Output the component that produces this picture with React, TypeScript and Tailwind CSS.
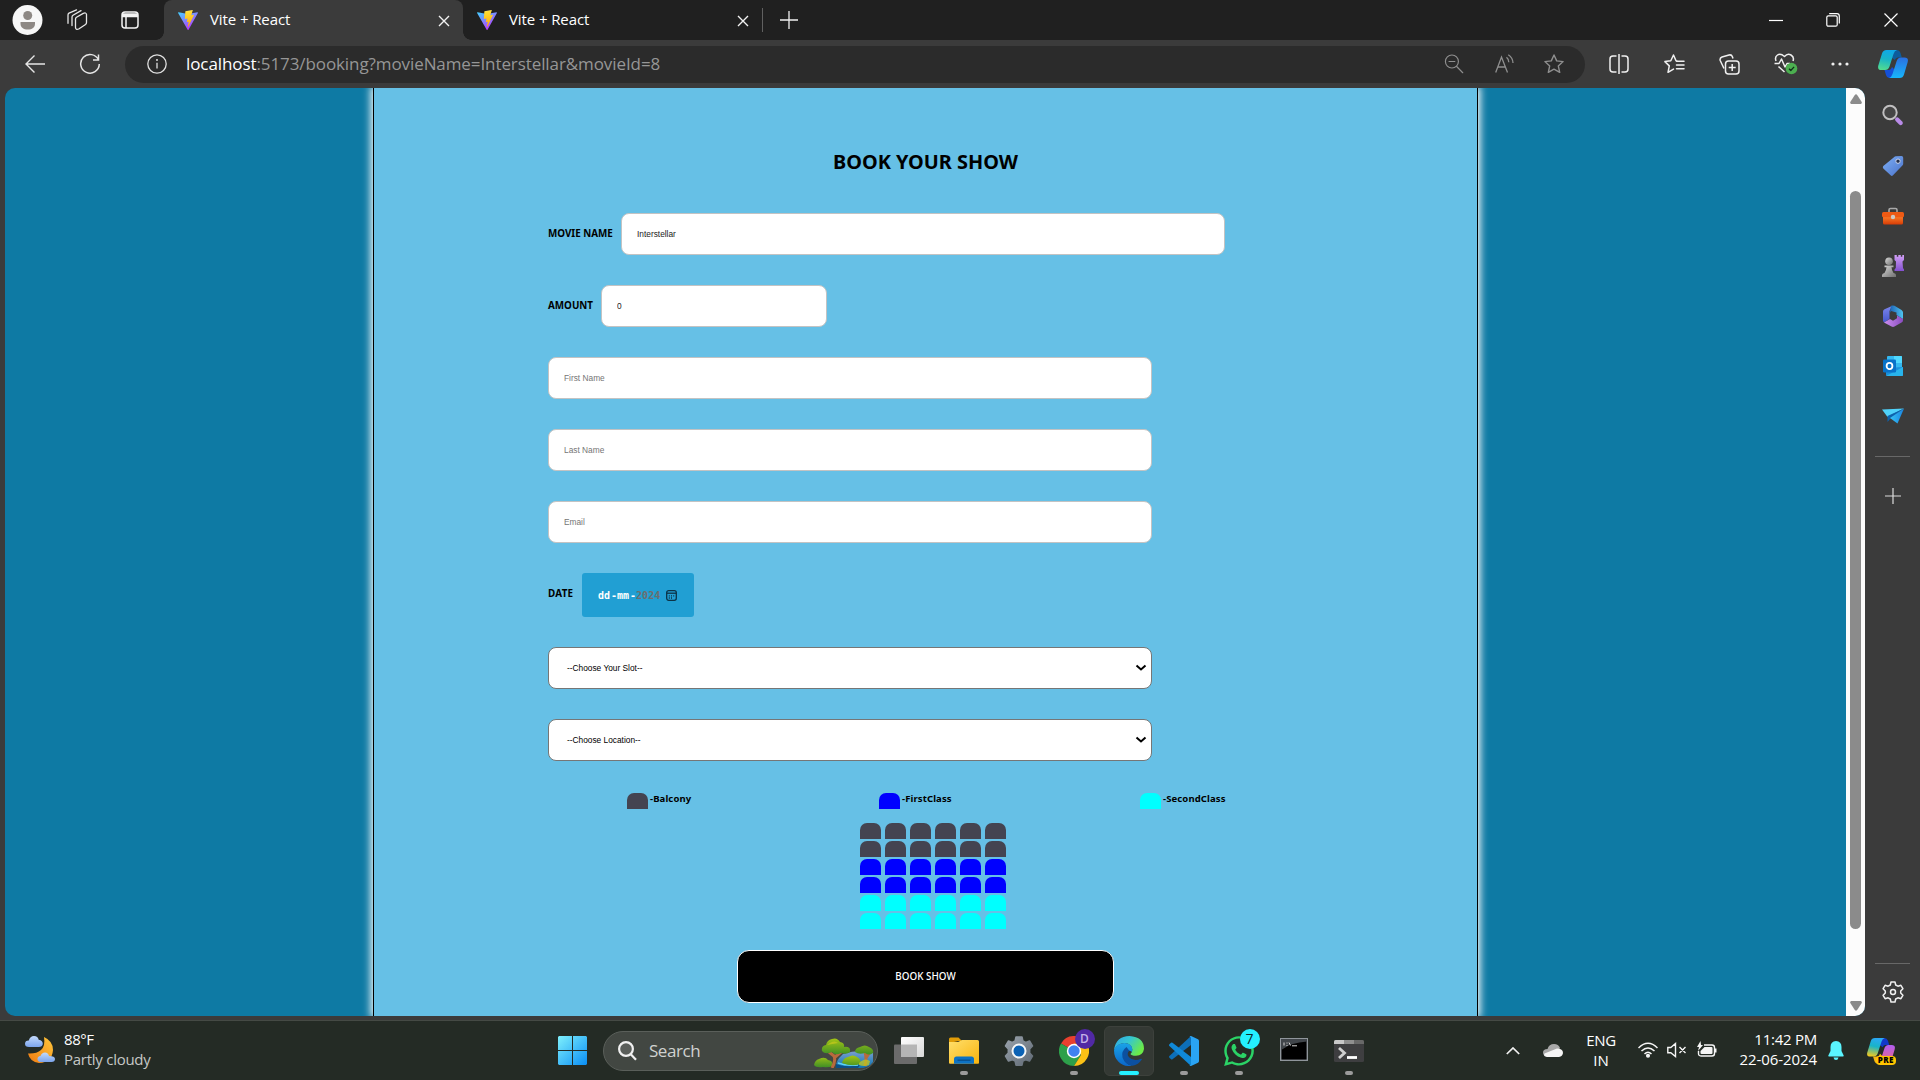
import type { ReactNode } from "react";
import { FaWhatsapp } from "react-icons/fa";

const ui = "font-['Open_Sans','Noto_Sans',sans-serif]";

function ViteLogo() {
  return (
    <svg viewBox="0 0 256 257" className="h-5 w-5 shrink-0">
      <defs>
        <linearGradient id="va" x1="0" x2="0.6" y1="0" y2="1"><stop stopColor="#41D1FF" /><stop offset="1" stopColor="#BD34FE" /></linearGradient>
        <linearGradient id="vb" x1="0.4" x2="0.5" y1="0" y2="1"><stop stopColor="#FFEA83" /><stop offset="0.1" stopColor="#FFDD35" /><stop offset="1" stopColor="#FFA800" /></linearGradient>
      </defs>
      <path fill="url(#va)" d="M255.153 37.938L134.897 252.976c-2.483 4.44-8.862 4.466-11.382.048L.875 37.958c-2.746-4.814 1.371-10.646 6.827-9.67l120.385 21.517a6.537 6.537 0 0 0 2.322-.004l117.867-21.483c5.438-.991 9.574 4.796 6.877 9.62Z" />
      <path fill="url(#vb)" d="M185.432.063L96.44 17.501a3.268 3.268 0 0 0-2.634 3.014l-5.474 92.456a3.268 3.268 0 0 0 3.997 3.378l24.777-5.718c2.318-.535 4.413 1.507 3.936 3.838l-7.361 36.047c-.495 2.426 1.782 4.5 4.151 3.78l15.304-4.649c2.372-.72 4.652 1.36 4.15 3.788l-11.698 56.621c-.732 3.542 3.979 5.473 5.943 2.437l1.313-2.028l72.516-144.72c1.215-2.423-.88-5.186-3.54-4.672l-25.505 4.922c-2.396.462-4.435-1.77-3.759-4.114l16.646-57.705c.677-2.35-1.37-4.583-3.769-4.113Z" />
    </svg>
  );
}

function CloseX() {
  return (
    <svg viewBox="0 0 12 12" className="mt-px h-3 w-3 shrink-0" stroke="#f2f2f2" strokeWidth="1.4" fill="none"><path d="M1 1l10 10M11 1L1 11" /></svg>
  );
}

function Line({ children, className }: { children: ReactNode; className: string }) {
  return (
    <svg viewBox="0 0 24 24" fill="none" stroke="currentColor" strokeWidth="1.4" strokeLinecap="round" strokeLinejoin="round" className={className}>{children}</svg>
  );
}

function TabStrip() {
  return (
    <div className="flex h-10 w-full items-stretch bg-[#202020] text-white">
      <div className="flex w-[164px] items-center pl-3">
        <svg viewBox="0 0 30 30" className="h-[30px] w-[31px]"><circle cx="15" cy="15" r="15" fill="#f7f7f7" /><circle cx="15.200" cy="10.500" r="4.500" fill="#8d8884" /><path d="M8 17h14.500v1.500c0 4-3 6-7.200 6S8 22.500 8 18.500z" fill="#8d8884" /></svg>
        <svg viewBox="0 0 22 22" className="ml-[23px] h-[22px] w-[22px]" fill="none" stroke="#e6e6e6" strokeWidth="1.300" strokeLinecap="round" strokeLinejoin="round"><path d="M9.500 10.200q0-1.200 1-1.900l6.800-3.900q2.700-1.300 3.200 1v8.200q0 1.200-1 1.900L12.700 20q-2.900 1.300-3.200-1.500zM6 16.500V8.200q0-1.200 1-1.900l8-4.700M2 14.300V6q0-1.200 1-1.900L10.500.8" /></svg>
        <svg viewBox="0 0 18 18" className="ml-[33px] h-[18px] w-[18px]" fill="none" stroke="#f2f2f2" strokeWidth="1.500"><rect x="1" y="1" width="16" height="16" rx="3" /><path d="M1 3.500h16M1 5h16" strokeWidth="2.500" /><path d="M5 5v12" /></svg>
      </div>
      <div className="relative flex w-[299px] items-center rounded-t-lg bg-[#3b3b3b] pl-3.5 pr-[13px]">
        <ViteLogo />
        <span className="-mt-0.5 ml-3 flex-1 text-[15px] tracking-[-0.1px]">Vite + React</span>
        <CloseX />
        <div className="absolute bottom-0 -left-2 h-2 w-2 bg-[radial-gradient(circle_at_0_0,#202020_7.5px,#3b3b3b_8px)]" />
        <div className="absolute bottom-0 -right-2 h-2 w-2 bg-[radial-gradient(circle_at_100%_0,#202020_7.5px,#3b3b3b_8px)]" />
      </div>
      <div className="flex w-[299px] items-center pl-3.5 pr-[13px]">
        <ViteLogo />
        <span className="-mt-0.5 ml-3 flex-1 text-[15px] tracking-[-0.1px]">Vite + React</span>
        <CloseX />
      </div>
      <div className="my-2 w-px bg-[#606060]" />
      <div className="flex flex-1 items-center pl-[17px]">
        <svg viewBox="0 0 18 18" className="h-[18px] w-[18px]" stroke="#f0f0f0" strokeWidth="1.300"><path d="M9 0v18M0 9h18" /></svg>
      </div>
      <div className="flex items-center">
        <svg viewBox="0 0 14 14" className="mr-[43px] h-[14px] w-[14px]" stroke="#fff" strokeWidth="1.200"><path d="M0 7.500h14" /></svg>
        <svg viewBox="0 0 14 14" className="mr-[44px] h-[14px] w-[14px]" stroke="#fff" strokeWidth="1.200" fill="none"><rect x=".8" y="2.800" width="10.400" height="10.400" rx="1.500" /><path d="M3.200.7h7.800q2.300 0 2.300 2.300v7.500" /></svg>
        <svg viewBox="0 0 14 14" className="mr-[22px] h-[14px] w-[14px]" stroke="#fff" strokeWidth="1.200"><path d="M.5.5l13 13M13.500.5l-13 13" /></svg>
      </div>
    </div>
  );
}

function CopilotLogo({ id, warm }: { id: string; warm?: boolean }) {
  return (
    <svg viewBox="0 0 30 28" className="h-[28px] w-[30px]">
      <defs>
        <linearGradient id={id + "a"} x1=".5" x2=".3" y1="0" y2="1"><stop stopColor={warm ? "#2ba8f5" : "#10a8e8"} /><stop offset=".45" stopColor="#18b4c8" /><stop offset="1" stopColor={warm ? "#f5c91c" : "#52dc8f"} /></linearGradient>
        <linearGradient id={id + "b"} x1=".5" x2=".5" y1="0" y2="1"><stop stopColor={warm ? "#b05cf2" : "#2b6fe0"} /><stop offset="1" stopColor={warm ? "#f26a78" : "#17b6fb"} /></linearGradient>
      </defs>
      <path d="M14 0h4.500q3 0 4 3l1.300 4.500h-4q-2 0-3 2.500l-4-3z" fill={warm ? "#1238c8" : "#0d5c9c"} />
      <path d="M16 28h-4q-3 0-4-3l-1.500-5h4q2.500 0 3.500-3l4 4z" fill={warm ? "#f7b514" : "#1550d8"} />
      <path d="M8.500 0H19q-2.500.6-3.500 4l-4 12.500Q10.300 20 7 20H3.500Q-.8 20 .3 15.500L4 3.500Q5 0 8.500 0z" fill={`url(#${id}a)`} />
      <path d="M21.500 28H11q2.500-.6 3.500-4l4-12.500Q19.700 7.500 23 7.500h3.500q4.300 0 3.200 4.500L26 24.500Q25 28 21.500 28z" fill={`url(#${id}b)`} />
    </svg>
  );
}

function Toolbar() {
  return (
    <div className="flex h-12 w-full items-center bg-[#3b3b3b] text-[#e9e9e9]">
      <svg viewBox="0 0 20 18" className="ml-[25px] h-[18px] w-5" fill="none" stroke="#e6e6e6" strokeWidth="1.400"><path d="M20 9H1M9.500.5L1 9l8.500 8.500" /></svg>
      <svg viewBox="0 0 22 22" className="ml-[34px] h-[22px] w-[22px]" fill="none" stroke="#e6e6e6" strokeWidth="1.500"><path d="M19.500 7A9.300 9.300 0 1 0 20.300 11M19.500 1.500V7H14" /></svg>
      <div className="ml-[24px] flex h-[37px] w-[1460px] items-center rounded-full bg-[#2b2b2b] pl-[22px]">
        <svg viewBox="0 0 20 20" className="h-5 w-5" fill="none" stroke="#e0e0e0" strokeWidth="1.300"><circle cx="10" cy="10" r="9.200" /><path d="M10 8.800v5.700" /><circle cx="10" cy="6" r=".4" /></svg>
        <span className="-mt-0.5 ml-[19px] flex-1 text-[17px] leading-none tracking-[-0.09px] text-[#969696]"><span className="text-white">localhost</span>:5173/booking?movieName=Interstellar&amp;movieId=8</span>
        <Line className="mr-[31px] h-5 w-5 text-[#8f8f8f]"><circle cx="9.500" cy="9" r="7.800" /><path d="M15.200 15l7.300 7.500M6 9h7" /></Line>
        <svg viewBox="0 0 20 20" className="mr-[29px] h-5 w-5" fill="none" stroke="#8f8f8f" strokeWidth="1.300"><path d="M.7 18.500L6.500 3l6 15.500M3 13h7.500M11.500 3.200q2.300 1.800 2.300 5M13.300.8q4.500 3 4.700 8.200" /></svg>
        <svg viewBox="0 0 20 20" className="mr-[21px] h-5 w-5" fill="none" stroke="#8f8f8f" strokeWidth="1.400" strokeLinejoin="round"><path d="M10 1l2.700 5.900 6.400.7-4.800 4.300 1.400 6.400L10 15.100l-5.700 3.200 1.400-6.400L.9 7.600l6.400-.7z" /></svg>
      </div>
      <svg viewBox="0 0 20 20" className="ml-[24px] h-5 w-5" fill="none" stroke="#f0f0f0" strokeWidth="1.500"><path d="M7.500 2H4Q1 2 1 5v10q0 3 3 3h3.500M12.500 2H16q3 0 3 3v10q0 3-3 3h-3.500M10 0v20" /></svg>
      <svg viewBox="0 0 21 20" className="ml-[35px] h-5 w-[21px]" fill="none" stroke="#f0f0f0" strokeWidth="1.500" strokeLinejoin="round" strokeLinecap="round"><path d="M13 7l-1-.2L9.500 1 6.800 6.800.9 7.600l4.400 4.300L4 18.300l5.500-3.200M12.500 7.300H20M12.500 11H20M12.500 14.700H20" /></svg>
      <svg viewBox="0 0 21 21" className="ml-[34px] h-[21px] w-[21px]" fill="none" stroke="#f0f0f0" strokeWidth="1.500" strokeLinejoin="round"><path d="M5 14.500L1.200 6.500Q.5 4 3 3L10 1q2.500-.6 3.300 1.500l.7 2" /><rect x="6.500" y="7" width="13.500" height="13" rx="3" /><path d="M13.200 10v7M9.700 13.500h7" /></svg>
      <svg viewBox="0 0 24 22" className="ml-[34px] h-[22px] w-6" fill="none" stroke="#f0f0f0" strokeWidth="1.500" strokeLinejoin="round"><path d="M2 8Q.5 4 3.500 2t7 1.500q3-3.500 6.500-1.500t2 6M.5 10.500H5L7.500 6l3.500 8 2-3.500h3M4.500 13.500l6 5.500" /><circle cx="17.500" cy="15.500" r="5.800" fill="#4caf50" stroke="none" /><path d="M15 15.700l1.800 1.800 3.300-3.600" strokeWidth="1.300" stroke="#10301a" /></svg>
      <svg viewBox="0 0 18 4" className="ml-[33px] h-1 w-[18px]" fill="#f0f0f0"><circle cx="2" cy="2" r="1.600" /><circle cx="9" cy="2" r="1.600" /><circle cx="16" cy="2" r="1.600" /></svg>
      <div className="ml-[29px]"><CopilotLogo id="ca" /></div>
    </div>
  );
}

const label = "font-['Noto_Sans',sans-serif] font-bold leading-none text-black";
const inputBase = "h-[42px] rounded-lg border border-[#c3c3c3] bg-white px-[15px] font-['Liberation_Sans',Arial,sans-serif] text-[8.33px] text-[#222] outline-none placeholder:text-[#757575]";

function SelectBox({ text }: { text: string }) {
  return (
    <div className="flex h-[42px] w-[604px] items-center justify-between rounded-lg border border-[#767676] bg-white pl-[18px] pr-[4px] font-['Liberation_Sans',Arial,sans-serif] text-[8.33px] text-black">
      <span>{text}</span>
      <svg viewBox="0 0 12 8" className="h-2 w-3" fill="none" stroke="#000" strokeWidth="2"><path d="M1.500 1.500L6 5.500l4.500-4" /></svg>
    </div>
  );
}

const seatColors = ["bg-[#444451]", "bg-[#444451]", "bg-[#0000ff]", "bg-[#0000ff]", "bg-[#00ffff]", "bg-[#00ffff]"];

function Legend({ color, name, className }: { color: string; name: string; className: string }) {
  return (
    <div className={"flex " + className}>
      <div className={"h-4 w-[21px] rounded-t-[7px] " + color} />
      <span className={label + " ml-[2px] mt-px self-start text-[9.500px] tracking-[0.12px]"}>{name}</span>
    </div>
  );
}

function BookingPage() {
  return (
    <div className="flex h-[928px] w-[1860px] overflow-hidden rounded-[10px] bg-[#0e7aa4]">
      <div className="flex w-[1841px] justify-start overflow-hidden pl-[368px]">
        <div className="flex h-full w-[1105px] flex-col border-x border-black bg-[#66c0e6] pl-[174px] shadow-[0_0_8px_2px_#fff]">
          <h1 className={label + " -ml-[174px] mt-[64px] h-5 text-center text-[19.900px]"}>BOOK YOUR SHOW</h1>
          <div className="mt-[41px] flex items-center">
            <span className={label + " w-[73px] whitespace-nowrap text-[9.850px]"}>MOVIE NAME</span>
            <input readOnly value="Interstellar" className={inputBase + " w-[604px]"} />
          </div>
          <div className="mt-[30px] flex items-center">
            <span className={label + " w-[53px] whitespace-nowrap text-[9.850px]"}>AMOUNT</span>
            <input readOnly value="0" className={inputBase + " w-[226px]"} />
          </div>
          <input readOnly placeholder="First Name" className={inputBase + " mt-[30px] w-[604px]"} />
          <input readOnly placeholder="Last Name" className={inputBase + " mt-[30px] w-[604px]"} />
          <input readOnly placeholder="Email" className={inputBase + " mt-[30px] w-[604px]"} />
          <div className="mt-[30px] flex items-center">
            <span className={label + " -mt-0.5 w-[34px] text-[9.850px] tracking-[0.25px]"}>DATE</span>
            <div className="flex h-11 w-[112px] items-center rounded-[3px] bg-[#219fd3] pl-4 font-['DejaVu_Sans_Mono',monospace] text-[10px] font-bold text-white">
              <span>dd</span><span className="ml-px w-[6px]">-</span><span>mm</span><span className="ml-px w-[6px]">-</span><span className="text-[#6d6d6d]">2024</span>
              <svg viewBox="0 0 11 11" className="ml-[6px] h-[11px] w-[11px]" fill="none" stroke="#0c3346" strokeWidth="1.300"><rect x=".7" y=".7" width="9.600" height="9.600" rx="2" /><path d="M.7 3.200h9.600" /><path d="M2.800 5.800h1M5 5.800h1M7.200 5.800h1M2.800 8h1M5 8h1" /></svg>
            </div>
          </div>
          <div className="mt-[30px] flex flex-col gap-[30px]">
            <SelectBox text="--Choose Your Slot--" />
            <SelectBox text="--Choose Location--" />
          </div>
          <div className="mt-8 flex pl-[79px]">
            <Legend color="bg-[#444451]" name="-Balcony" className="w-[252px]" />
            <Legend color="bg-[#0000ff]" name="-FirstClass" className="w-[261px]" />
            <Legend color="bg-[#00ffff]" name="-SecondClass" className="w-[100px]" />
          </div>
          <div className="ml-[312px] mt-[14px] grid w-[146px] grid-cols-6 gap-x-1 gap-y-0.5">
            {seatColors.map((c, r) => [0, 1, 2, 3, 4, 5].map((n) => <div key={r + "-" + n} className={"h-4 w-[21px] rounded-t-[7px] " + c} />))}
          </div>
          <button className="ml-[189px] mt-[21px] h-[53px] w-[377px] rounded-xl border border-white bg-black font-['Noto_Sans',sans-serif] text-[9.850px] font-medium text-white">BOOK SHOW</button>
        </div>
      </div>
      <div className="flex w-[19px] flex-col items-center bg-[#fcfcfc]">
        <svg viewBox="0 0 12 10" className="mt-1.5 h-2.5 w-3" fill="#8b8b8b"><path d="M4.800 1Q6 -.5 7.200 1l4.500 7q.6 1.700-1 2H1.300q-1.600-.3-1-2z" /></svg>
        <div className="mt-[87px] h-[738px] w-[11px] rounded-full bg-[#8b8b8b]" />
        <svg viewBox="0 0 12 10" className="mt-[72px] h-2.5 w-3 rotate-180" fill="#8b8b8b"><path d="M4.800 1Q6 -.5 7.200 1l4.500 7q.6 1.700-1 2H1.300q-1.600-.3-1-2z" /></svg>
      </div>
    </div>
  );
}

function Cell({ children }: { children: ReactNode }) {
  return <div className="flex h-[50.2px] items-center justify-center">{children}</div>;
}

function Sidebar() {
  return (
    <div className="flex w-[55px] flex-col items-center pt-[2px]">
      <svg width="0" height="0" className="absolute"><defs>
        <linearGradient id="tag" x1="0" x2="1" y1="0" y2="1"><stop stopColor="#7fb0f7" /><stop offset="1" stopColor="#4a72c9" /></linearGradient>
        <linearGradient id="box" x1="0" x2="0" y1="0" y2="1"><stop stopColor="#f77a28" /><stop offset="1" stopColor="#d83c05" /></linearGradient>
        <linearGradient id="pawn" x1="0" x2="1" y1="0" y2="1"><stop stopColor="#d8d8d8" /><stop offset="1" stopColor="#707070" /></linearGradient>
        <linearGradient id="rook" x1="0" x2="0" y1="0" y2="1"><stop stopColor="#d3a0f7" /><stop offset="1" stopColor="#8350cf" /></linearGradient>
        <linearGradient id="m1" x1="0" x2="0" y1="0" y2="1"><stop stopColor="#7d86ee" /><stop offset="1" stopColor="#4557cc" /></linearGradient>
        <linearGradient id="m2" x1="0" x2="1"><stop stopColor="#1b62b5" /><stop offset="1" stopColor="#4fc4f0" /></linearGradient>
        <linearGradient id="m3" x1="0" x2="1"><stop stopColor="#cc8ff0" /><stop offset="1" stopColor="#8a4cc0" /></linearGradient>
        <linearGradient id="pl" x1="0" x2="1"><stop stopColor="#35c2f5" /><stop offset="1" stopColor="#1b84e0" /></linearGradient>
      </defs></svg>
      <Cell><svg viewBox="0 0 22 22" className="h-[22px] w-[22px]" fill="none"><circle cx="8" cy="8.500" r="6.700" stroke="#c0bfc0" strokeWidth="2" fill="#454545" /><path d="M15.200 15.500l3.500 3.500" stroke="#b98be8" strokeWidth="4.200" strokeLinecap="round" /></svg></Cell>
      <Cell><svg viewBox="0 0 22 22" className="mt-px h-[22px] w-[22px]"><path d="M12 2.200Q12.800 1.300 14 1.300l5.500-.3q1.700 0 1.700 1.700v6q0 1-.8 1.900L11 20.300q-1.200 1.200-2.400 0L1.300 13.500q-1-1.200 0-2.400z" fill="url(#tag)" /><circle cx="16" cy="6.200" r="2.200" fill="#25314d" stroke="#cfd8ef" strokeWidth="1" /></svg></Cell>
      <Cell><svg viewBox="0 0 22 18" className="mt-0.5 h-[18px] w-[22px]"><path d="M7 6V3q0-1.500 1.500-1.500h5Q15 1.500 15 3v3" fill="none" stroke="#a9a9a9" strokeWidth="1.600" /><path d="M1 10h20v6q0 1.500-1.500 1.500h-17Q1 17.500 1 16z" fill="url(#box)" /><path d="M0 6.500Q0 5 1.500 5h19Q22 5 22 6.500v2.200q0 1.500-1.500 1.500h-19Q0 10.200 0 8.700z" fill="#ee5a14" /><circle cx="11" cy="10" r="2.200" fill="#cfcac6" /></svg></Cell>
      <Cell><svg viewBox="0 0 22 22" className="h-[22px] w-[22px]"><path d="M12.500 0h2.300v1.700h1.500V0h2.500v1.700h1.500V0H22v5l-1.500 1.500L21 13l1 1.500V16h-9.500v-1.500l1.300-1.500.2-6.500L12.500 5z" fill="url(#rook)" /><circle cx="7" cy="6.300" r="3.800" fill="url(#pawn)" /><path d="M2.500 10.500h9v1.800H9.500q.3 3.500 2 5.700h-9q1.800-2.500 2-5.700h-2zM2.500 18h9q2.500.3 2.500 2v2H0v-2q.3-1.700 2.500-2z" fill="url(#pawn)" /></svg></Cell>
      <Cell><svg viewBox="0 0 22 22" className="h-[22px] w-[22px]"><path d="M10 1L7.500 6v8L2 17.500 1 16V6.500Q1 5 2.500 4.200z" fill="url(#m1)" /><path d="M9 .8Q11 0 12.500.8L19.500 5Q21 6 21 7.500V14l-6.500-4V7.500L9 6 7.800 8z" fill="url(#m2)" /><path d="M2 17.500L8 14l3 1.800 4-2.600V10.500l6 3.500v1.300q0 1.300-1 2L12.500 21.500q-1.500.8-3 0z" fill="url(#m3)" /></svg></Cell>
      <Cell><svg viewBox="0 0 20 20" className="h-5 w-5"><rect x="4" y="0" width="15" height="13" rx="1" fill="#34b8f0" /><path d="M11 0h7q1 0 1 1v6h-8z" fill="#4fd8ff" /><path d="M3 12l17-1v8q0 1-1 1H4q-1 0-1-1z" fill="#1b90dc" /><path d="M3 20l17-9v8q0 1-1 1z" fill="#28b4ec" /><rect x="0" y="3.500" width="13" height="13" rx="1.200" fill="#0872c9" /><ellipse cx="6.500" cy="10" rx="2.900" ry="3.100" fill="none" stroke="#fff" strokeWidth="1.800" /></svg></Cell>
      <Cell><svg viewBox="0 0 22 16" className="h-4 w-[22px]"><path d="M0 1.500L22 .5 5.500 9z" fill="#4fd2fa" /><path d="M5.500 8L22 .5 8.500 10.500 5.500 14z" fill="#0d62ad" /><path d="M22 .5L15.500 15.500 8 10z" fill="url(#pl)" /></svg></Cell>
      <div className="mt-[15px] h-px w-[35px] bg-[#686868]" />
      <svg viewBox="0 0 16 16" className="mt-[31px] h-4 w-4" stroke="#dcdcdc" strokeWidth="1.200"><path d="M8 0v16M0 8h16" /></svg>
      <div className="mt-auto h-px w-[35px] bg-[#686868]" />
      <svg viewBox="0 0 22 22" className="mb-[17px] mt-[17px] h-[22px] w-[22px]" fill="none" stroke="#f0f0f0" strokeWidth="1.500" strokeLinejoin="round"><path d="M9 1h4l.7 3 2.200 1.200 3-.9 2 3.400L18.700 10v2l2.200 2.300-2 3.400-3-.9-2.200 1.200-.7 3H9l-.7-3-2.200-1.200-3 .9-2-3.400L3.300 12v-2L1.100 7.700l2-3.400 3 .9L8.300 4z" /><circle cx="11" cy="11" r="2.500" /></svg>
    </div>
  );
}

function TaskApp({ children, dot, active }: { children: ReactNode; dot?: boolean; active?: boolean }) {
  return (
    <div className="flex w-[55px] justify-center">
      <div className={active ? "relative flex h-[50px] w-[50px] items-center justify-center rounded-md border border-[#3d413c] bg-[#343934]" : "relative flex h-[50px] w-[50px] items-center justify-center"}>
        {children}
        {dot && <div className="absolute bottom-[1px] h-1 w-2 rounded-full bg-[#9b9b9b]" />}
        {active && <div className="absolute bottom-0 h-1 w-5 rounded-full bg-[#24f0ff]" />}
      </div>
    </div>
  );
}

function Taskbar() {
  return (
    <div className={"flex h-[60px] w-full items-center border-t border-[#454a45] bg-[#242b25] text-white " + ui}>
      <div className="flex w-[545px] items-center pl-[25px]">
        <svg viewBox="0 0 30 28" className="-mt-1 h-7 w-[30px]">
          <defs><linearGradient id="mo" x1="1" x2="0" y1="0" y2="1"><stop stopColor="#ffc83c" /><stop offset="1" stopColor="#f07a10" /></linearGradient><linearGradient id="cl" x1="0" x2="0" y1="0" y2="1"><stop stopColor="#c3dafc" /><stop offset="1" stopColor="#7ba4ec" /></linearGradient></defs>
          <path d="M19 2q1.500 9-3 13T3 18.500q2 8.500 11 9.500 13-.5 14-13 0-9-9-13z" fill="url(#mo)" />
          <path d="M4 12q-4 0-4-3.200T3.800 5.500Q5 1 9 1t4.700 3.800Q18 5.500 17.800 9q-.5 3-4 3z" fill="url(#cl)" />
          <path d="M15.500 27q-3-.3-3-3t3-3q1.200-3.500 4.500-3.500T24 21q6 0 6 3t-3.500 3z" fill="url(#cl)" />
        </svg>
        <div className="-mt-[3px] ml-[9px] text-[15px] leading-5">
          <div className="tracking-[-0.45px]">88°F</div>
          <div className="tracking-[-0.26px] text-[#c6c8c6]">Partly cloudy</div>
        </div>
      </div>
      <div className="flex w-[55px] justify-center">
        <svg viewBox="0 0 29 29" className="h-[29px] w-[29px]"><defs><linearGradient id="wn" x1="0" x2="1" y1="0" y2="1"><stop stopColor="#7ff0fc" /><stop offset="1" stopColor="#0a8ef5" /></linearGradient></defs><path d="M1 0h13v14H0V1zM15 0h13l1 1v13H15zM0 15h14v14H1l-1-1zM15 15h14v13l-1 1H15z" fill="url(#wn)" /></svg>
      </div>
      <div className="ml-[3px] flex h-10 w-[275px] items-center overflow-hidden rounded-full border border-[#5a5f5a] bg-[#424742] pl-[14px] pr-[3px]">
        <svg viewBox="0 0 19 20" className="h-5 w-[19px]" fill="none" stroke="#f0f0f0" strokeWidth="2.200"><circle cx="8" cy="8" r="6.900" fill="#5a5e5a" /><path d="M12.800 13.200l5.200 5.500" /></svg>
        <span className="-mt-px ml-[12px] flex-1 text-[17px] leading-none tracking-[-0.45px] text-[#d0d2d0]">Search</span>
        <svg viewBox="0 0 60 30" className="mt-1 h-[30px] w-[60px]">
          <defs><linearGradient id="lf" x1="0" x2="0" y1="0" y2="1"><stop stopColor="#a5c514" /><stop offset="1" stopColor="#3f8f26" /></linearGradient><linearGradient id="rv" x1="0" x2="0" y1="0" y2="1"><stop stopColor="#7d9fd0" /><stop offset="1" stopColor="#0875b5" /></linearGradient></defs>
          <path d="M29 16q14-5 30-2v10q-4 6-14 6H22q-1-7 7-14z" fill="url(#rv)" />
          <path d="M22 26q10 4 24 1l-2 3H22z" fill="#0b4f86" /><path d="M24 25q8 3 20 2" stroke="#5fd4f5" strokeWidth="1.500" fill="none" />
          <path d="M0 27q1-5 5-6 6-3 9 1 6 1 4 6-3 2-9 1-7 1-9-2zM28 25q1-5 6-6 5-3 9 0 5 3 3 7-8 3-18-1z" fill="url(#lf)" />
          <path d="M18 30q4-7 2-12l-5-4M20 20l8-7M51 28q2-7 0-14M52 20l4-6" stroke="#b86a3c" strokeWidth="3" fill="none" />
          <path d="M8 13q-1-5 4-6 1-5 6-6 5-2 8 3 5 1 4 5 7-1 6 5-3 3-9 1-6 3-9-1-7 3-10-1zM41 14q0-4 5-5 5-3 9 0 5 2 4 6-4 3-8 0-6 2-10-1z" fill="url(#lf)" />
          <path d="M13 7q7-6 11-2M45 25q6-6 11-2l-1 4q-5 2-10 0z" fill="#c4c81c" opacity=".75" />
        </svg>
      </div>
      <div className="ml-[3px] flex">
        <TaskApp><svg viewBox="0 0 30 27" className="mb-px h-[27px] w-[30px]"><defs><linearGradient id="tv" x1="0" x2="1" y1="0" y2="1"><stop stopColor="#ffffff" /><stop offset="1" stopColor="#d8d8d8" /></linearGradient></defs><rect x="0" y="7.500" width="23" height="19.500" rx="1" fill="#6b6b6b" /><rect x="7" y="0" width="23" height="20" rx="1" fill="url(#tv)" /><rect x="7" y="7.500" width="16" height="12.500" fill="#b5b5b5" /></svg></TaskApp>
        <TaskApp dot><svg viewBox="0 0 30 27" className="h-[27px] w-[30px]"><defs><linearGradient id="fo" x1="0" x2="1" y1="0" y2="1"><stop stopColor="#ffdf6c" /><stop offset="1" stopColor="#f9b40d" /></linearGradient></defs><path d="M0 2Q0 .5 1.500.5h8L13 4h-3L0 6z" fill="#e09c08" /><path d="M0 5h9l4-2h15.500Q30 3 30 4.500V26q0 .8-1 .8H1q-1 0-1-1z" fill="url(#fo)" /><path d="M5 26.800V22q0-2.500 2.500-2.500h15Q25 19.500 25 22v4.800z" fill="#0d72c4" /><path d="M8.500 23.200h13" stroke="#084f8c" strokeWidth="1.300" /></svg></TaskApp>
        <TaskApp><svg viewBox="0 0 32 30" className="h-[30px] w-8"><defs><linearGradient id="sg" x1="0" x2="1" y1="0" y2="1"><stop stopColor="#9aa3ac" /><stop offset="1" stopColor="#5f6974" /></linearGradient></defs><path d="M13 1h6l.9 4 2.800 1.500L26.500 5l3 5-2.800 3v4l2.800 3-3 5-3.800-1.300-2.800 1.500-.9 4h-6l-.9-4-2.800-1.500L5.500 25l-3-5 2.800-3v-4l-2.800-3 3-5 3.800 1.500L12.100 5z" fill="url(#sg)" stroke="url(#sg)" strokeWidth="1.500" strokeLinejoin="round" /><circle cx="16" cy="15" r="6.500" fill="#0b62b5" stroke="#f5f7f8" strokeWidth="2" /></svg></TaskApp>
        <TaskApp dot>
          <svg viewBox="0 0 30 30" className="h-[30px] w-[30px]"><path d="M15 15L2 7.500A15 15 0 0 1 28 7.500z" fill="#e8402f" /><path d="M15 15L2 7.500A15 15 0 0 0 15 30l7-11z" fill="#2da04a" /><path d="M15 7.500h13A15 15 0 0 1 15 30l7-11z" fill="#fbc116" /><circle cx="15" cy="15" r="7.200" fill="#fff" /><circle cx="15" cy="15" r="5.700" fill="#3f82f0" /></svg>
          <div className="absolute right-[4px] top-[3px] flex h-5 w-5 items-center justify-center rounded-full bg-[#5129a5] text-[12px] font-semibold leading-none text-[#c4b2e8]">D</div>
        </TaskApp>
        <TaskApp active><svg viewBox="0 0 30 30" className="h-[30px] w-[30px]"><defs><linearGradient id="e1" x1="0" x2="1" y1="0" y2=".5"><stop stopColor="#2fa5e8" /><stop offset=".5" stopColor="#35c6d0" /><stop offset="1" stopColor="#6bea48" /></linearGradient><linearGradient id="e2" x1="0" x2="0" y1="0" y2="1"><stop stopColor="#1aa3e8" /><stop offset="1" stopColor="#0b66c8" /></linearGradient></defs><path d="M0 14Q2 0 15.500 0 30 1 30 13q-1 6.500-8 6.800-5 0-5.500-1.800 2-1.500 1.800-4.500-.6-6-7.800-6.500Q4 7 0 14z" fill="url(#e1)" /><path d="M0 14Q3 7 10.500 7q7.200.5 7.800 6 .1 1.500-.6 3-1-1.500-3.200-1.500-4.500.5-4.500 6 .5 7.500 8 9.200-8 1.500-13.500-4Q0 21.500 0 14z" fill="url(#e2)" /><path d="M12.500 11q-5.500 4-4 10.500 2.500 7.500 10 8.200 6-1 9.300-6.200.3-1-.8-.8-7.500 3-12-1.500-2.800-3.500.3-6.500z" fill="#0c50a0" /></svg></TaskApp>
        <TaskApp dot><svg viewBox="0 0 30 30" className="h-[30px] w-[30px]"><path d="M22 0v9L3.500 23.200q-.8.500-1.500 0L.4 21.700q-.8-.9 0-1.700z" fill="#0d6fb8" /><path d="M22 30v-9L3.500 6.800q-.8-.5-1.500 0L.4 8.300q-.8.9 0 1.700z" fill="#1089d8" /><path d="M22 0l7 3.300q1 .6 1 1.700v20q0 1.100-1 1.700L22 30q-1 .2-1.500-.8 1.500.5 1.500-1V2q0-1.500-1.500-1Q21 0 22 0z" fill="#2aa4f4" /></svg></TaskApp>
        <TaskApp dot>
          <FaWhatsapp className="h-[34px] w-[34px] text-[#2bd366]" />
          <div className="absolute right-[4px] top-[3px] flex h-5 w-5 items-center justify-center rounded-full bg-[#24f0ff] text-[14px] leading-none text-[#0d2a2d]">7</div>
        </TaskApp>
        <TaskApp><svg viewBox="0 0 28 23" className="mb-0.5 h-[23px] w-7"><rect x=".7" y=".7" width="26.600" height="21.600" fill="#000" stroke="#8f959b" strokeWidth="1.400" /><path d="M1 1h26v2.500q-16 1-25 8H1z" fill="#40454a" /><path d="M4 4.500v3M7 4.500v1M7 7v1M9 4.500l1.500 3M12 7.800h5" stroke="#d5d5d5" strokeWidth="1" /></svg></TaskApp>
        <TaskApp dot><svg viewBox="0 0 30 22" className="h-[22px] w-[30px]"><rect width="30" height="22" rx="1.500" fill="#3e3e40" /><path d="M0 4V1.500Q0 0 1.500 0H10v4z" fill="#c8c8c8" /><path d="M10 0h10v4H10z" fill="#8f8f8f" /><path d="M20 0h8.500Q30 0 30 1.500V4H20z" fill="#686868" /><path d="M5 8l5.500 5L5 18" stroke="#cfcfcf" strokeWidth="2.800" fill="none" /><path d="M13 17.500h10" stroke="#fff" strokeWidth="2.800" /></svg></TaskApp>
      </div>
      <div className="ml-[130px] flex flex-1 items-center">
        <svg viewBox="0 0 14 8" className="h-2 w-3.5" fill="none" stroke="#f2f2f2" strokeWidth="1.700"><path d="M.8 7L7 1l6.200 6" /></svg>
        <svg viewBox="0 0 20 13" className="ml-[23px] h-[13px] w-5"><path d="M4 12.500Q0 12 0 8.500T4.500 5Q6 0 11 0q4.500 0 6 4l-4 4z" fill="#a8a8a8" /><path d="M4 13q-4-.5-2.500-3.500L14 4.500q6 0 6 4.500-.5 3.500-4 4z" fill="#f5f5f5" /></svg>
        <div className="-mt-0.5 ml-[22px] w-[32px] text-center text-[15px] leading-5"><div className="tracking-[-0.4px]">ENG</div><div>IN</div></div>
        <svg viewBox="0 0 20 16" className="-mt-0.5 ml-[21px] h-4 w-5" fill="none" stroke="#f5f5f5" strokeWidth="1.500"><path d="M.5 6q9.500-9.500 19 0M3.500 9q6.500-6 13 0M6.500 12q3.500-3.500 7 0" /><circle cx="10" cy="13.800" r="1.300" fill="#f5f5f5" /></svg>
        <svg viewBox="0 0 20 16" className="-mt-0.5 ml-[9px] h-4 w-5" fill="none" stroke="#f5f5f5" strokeWidth="1.400"><path d="M.8 5.500h3L8.500 1.500v13L3.800 10.800h-3zM12.500 5l6 6M18.500 5l-6 6" /></svg>
        <svg viewBox="0 0 20 17" className="-mt-0.5 ml-[10px] h-[17px] w-5"><path d="M7 4h8q2.500 0 2.500 2.500v6q0 2.500-2.500 2.500H4q-2.500 0-2.500-2.500V10" fill="none" stroke="#f5f5f5" strokeWidth="1.400" /><path d="M7.500 6h7q1 0 1 1v5q0 1-1 1h-10q-1 0-1-1v-2z" fill="#f5f5f5" /><path d="M18 7.500h1.500v4H18zM3.500 0L0 6h2L1 10l5-6H4z" fill="#f5f5f5" /></svg>
        <div className="-mt-[3px] ml-auto mr-[11px] text-right text-[15px] leading-5"><div className="tracking-[-0.25px]">11:42 PM</div><div className="tracking-[-0.08px]">22-06-2024</div></div>
        <svg viewBox="0 0 16 19" className="mr-[23px] h-[19px] w-4" fill="#5af5ff"><path d="M8 0q5.500.5 5.500 6v4l2.200 4.500q.3 1-.8 1H1.100q-1.100 0-.8-1L2.500 10V6Q2.500.5 8 0zM5.500 16.500h5Q10 19 8 19t-2.500-2.500z" /></svg>
        <div className="relative mr-[25px] flex w-[28px] justify-center"><CopilotLogo id="cb" warm /><div className="absolute -right-px bottom-0 flex h-[9px] items-center rounded-sm bg-[#ffc400] px-[2px] text-[8px] font-extrabold leading-none tracking-[0.5px] text-black">PRE</div></div>
      </div>
    </div>
  );
}

export default function App() {
  return (
    <div className={"flex h-[1080px] w-[1920px] flex-col overflow-hidden bg-[#3b3b3b] " + ui}>
      <TabStrip />
      <Toolbar />
      <div className="flex h-[932px] pl-[5px]">
        <BookingPage />
        <Sidebar />
      </div>
      <Taskbar />
    </div>
  );
}
